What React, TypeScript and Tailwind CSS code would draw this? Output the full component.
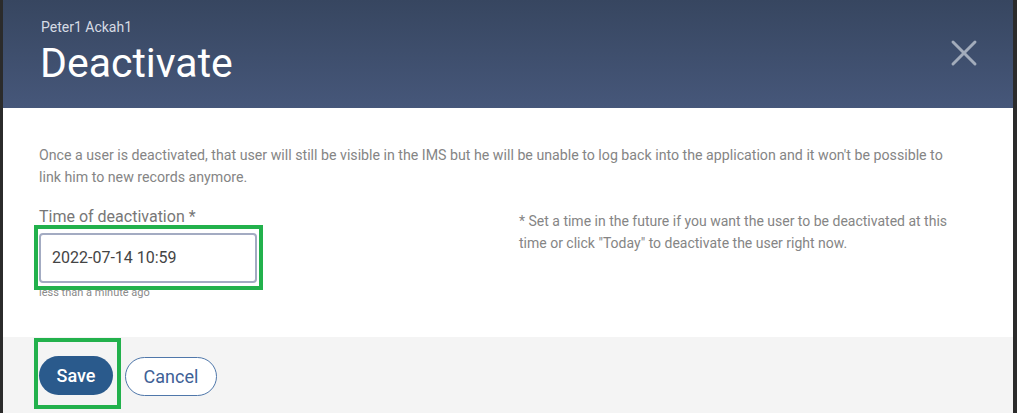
import { X } from "lucide-react";

export default function App() {
  return (
    <div
      className="flex h-[413px] w-[1017px] overflow-hidden bg-[#2b2b2b]"
      style={{ fontFamily: "Roboto, 'Liberation Sans', sans-serif" }}
    >
      <div className="ml-[3px] flex w-[1010px] flex-col">
        {/* header */}
        <div className="flex h-[108px] shrink-0 items-start justify-between bg-gradient-to-b from-[#374660] to-[#46577a] pl-[37px] pr-[27px]">
          <div className="pt-[18px]">
            <div className="pl-[1px] text-[14px] leading-[18px] text-[#d6dbe4]">Peter1 Ackah1</div>
            <h1 className="mt-[4px] text-[41px] leading-[46px] text-white">Deactivate</h1>
          </div>
          <button className="mt-[31px] text-[#a3acbb]">
            <X size={44} strokeWidth={1.6} />
          </button>
        </div>

        {/* body */}
        <div className="flex h-[229px] shrink-0 flex-col bg-white pl-[36px] pr-[52px] pt-[36px]">
          <p className="text-[14.2px] leading-[22px] text-[#858585]">
            Once a user is deactivated, that user will still be visible in the IMS but he will be unable to log back into
            the application and it won't be possible to link him to new records anymore.
          </p>
          <div className="mt-[19px] flex">
            <div className="w-[480px]">
              <label className="block text-[16px] leading-[20px] text-[#777]">Time of deactivation *</label>
              <div className="relative z-10 -ml-[5px] -mt-[2px] w-[229px] border-[4px] border-[#22b14c] pb-[3px] pl-[1px] pt-[4px]">
                <div className="flex h-[50px] w-[218px] items-center rounded-[4px] border-2 border-[#a3abc2] bg-white px-[11px] text-[16px] text-[#444]">
                  2022-07-14 10:59
                </div>
              </div>
              <div className="-mt-[4px] text-[11px] leading-[14px] text-[#8a8a8a]">less than a minute ago</div>
            </div>
            <p className="pt-[3px] text-[14px] leading-[22px] text-[#858585]">
              * Set a time in the future if you want the user to be deactivated at this
              <br />
              time or click "Today" to deactivate the user right now.
            </p>
          </div>
        </div>

        {/* footer */}
        <div className="flex flex-1 items-start gap-[4px] bg-[#f4f4f4] pl-[31px] pt-[1px]">
          <div className="border-[4px] border-[#22b14c] pb-[10px] pl-[1px] pr-[4px] pt-[14px]">
            <button className="h-[39px] w-[74px] rounded-full bg-[#2a5a8c] text-[18px] font-medium text-white">Save</button>
          </div>
          <button className="mt-[19px] h-[39px] w-[92px] rounded-full border border-[#4f77aa] bg-white text-[18px] text-[#3e6196]">
            Cancel
          </button>
        </div>
      </div>
    </div>
  );
}
